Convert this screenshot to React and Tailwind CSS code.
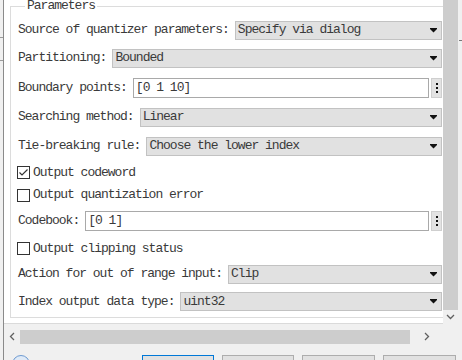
import React from "react";

const font = { fontFamily: '"Liberation Mono", "DejaVu Sans Mono", monospace' };

function Arrow() {
  return (
    <svg width="7" height="5" viewBox="0 0 7 5" className="shrink-0">
      <rect x="0" y="0" width="7" height="1" fill="#111" />
      <polygon points="0,1 7,1 3.5,4.5" fill="#111" />
    </svg>
  );
}

function Select({ value }) {
  return (
    <div className="flex-1 h-[19px] bg-[#e1e1e1] border border-[#c2c2c2] flex items-center pl-[2px] pr-[4px]">
      <span className="flex-1 whitespace-nowrap overflow-hidden">{value}</span>
      <Arrow />
    </div>
  );
}

function TextInput({ value }) {
  return (
    <div className="flex-1 flex items-center">
      <div className="flex-1 h-[20px] bg-white border border-[#a9a9a9] flex items-center pl-[2px]">
        <span className="whitespace-nowrap">{value}</span>
      </div>
      <div className="ml-[2px] w-[11px] h-[20px] bg-[#e3e3e3] border border-[#cfcfcf] flex flex-col items-center justify-center gap-[2px]">
        <div className="w-[2px] h-[2px] bg-[#111]" />
        <div className="w-[2px] h-[2px] bg-[#111]" />
        <div className="w-[2px] h-[2px] bg-[#111]" />
      </div>
    </div>
  );
}

function Row({ h, label, children }) {
  return (
    <div className={`flex items-center gap-[6px] ${h}`}>
      <span className="shrink-0 whitespace-nowrap">{label}</span>
      {children}
    </div>
  );
}

function Check({ h, label, checked }) {
  return (
    <div className={`flex items-center ${h}`}>
      <div className="w-[13px] h-[13px] ml-[-1px] border border-[#333] bg-white flex items-center justify-center shrink-0">
        {checked && (
          <svg width="11" height="11" viewBox="0 0 11 11">
            <polyline points="1.5,5.5 4,8 9.5,2.5" fill="none" stroke="#333" strokeWidth="1.2" />
          </svg>
        )}
      </div>
      <span className="ml-[3px] whitespace-nowrap">{label}</span>
    </div>
  );
}

export default function App() {
  return (
    <div
      className="w-[462px] h-[360px] overflow-hidden bg-[#f0f0f0] flex text-[13px] leading-[14px] tracking-[-1px] text-[#3a3a3a]"
      style={font}
    >
      {/* left strip */}
      <div className="w-[3px] shrink-0 flex flex-col">
        <div className="mt-[37px] h-px bg-[#9a9a9a]" />
        <div className="mt-[22px] h-px bg-[#9a9a9a]" />
      </div>
      <div className="w-px shrink-0 bg-[#8a8a8a]" />

      {/* main */}
      <div className="w-[455px] shrink-0 h-[360px] flex flex-col">
        <div className="flex h-[324px] shrink-0">
          <div className="w-[439px] h-[324px] bg-white border-b border-[#dadada] overflow-hidden">
            <fieldset className="ml-[6px] mt-[-1px] w-[450px] border border-[#dcdcdc] pl-[7px] pr-[17px] pb-0">
              <legend className="ml-[7px] px-[2px] leading-[14px]">Parameters</legend>
              <div className="pt-[3px]">
                <Row h="h-[28px]" label="Source of quantizer parameters:">
                  <Select value="Specify via dialog" />
                </Row>
                <Row h="h-[28px]" label="Partitioning:">
                  <Select value="Bounded" />
                </Row>
                <Row h="h-[31px]" label="Boundary points:">
                  <TextInput value="[0 1 10]" />
                </Row>
                <Row h="h-[28px]" label="Searching method:">
                  <Select value="Linear" />
                </Row>
                <Row h="h-[30px]" label="Tie-breaking rule:">
                  <Select value="Choose the lower index" />
                </Row>
                <Check h="h-[23px]" label="Output codeword" checked />
                <Check h="h-[22px]" label="Output quantization error" />
                <Row h="h-[29px]" label="Codebook:">
                  <TextInput value="[0 1]" />
                </Row>
                <Check h="h-[27px]" label="Output clipping status" />
                <Row h="h-[24px]" label="Action for out of range input:">
                  <Select value="Clip" />
                </Row>
                <Row h="h-[31px]" label="Index output data type:">
                  <Select value="uint32" />
                </Row>
              </div>
            </fieldset>
          </div>
          {/* vertical scrollbar */}
          <div className="w-[16px] flex flex-col">
            <div className="w-[15px] h-[310px] bg-[#cdcdcd]" />
            <div className="flex-1 flex items-center justify-center pr-[2px]">
              <svg width="9" height="6" viewBox="0 0 9 6">
                <polyline points="1,1 4.5,4.5 8,1" fill="none" stroke="#606060" strokeWidth="1.3" />
              </svg>
            </div>
          </div>
        </div>

        {/* horizontal scrollbar */}
        <div className="h-[23px] shrink-0 flex items-center">
          <div className="w-[16px] flex items-center justify-center pt-[1px]">
            <svg width="6" height="9" viewBox="0 0 6 9">
              <polyline points="5,1 1.5,4.5 5,8" fill="none" stroke="#606060" strokeWidth="1.3" />
            </svg>
          </div>
          <div className="w-[390px] h-[14px] bg-[#cdcdcd] mt-[3px]" />
          <div className="w-[33px] flex items-center justify-center pt-[1px]">
            <svg width="6" height="9" viewBox="0 0 6 9">
              <polyline points="1,1 4.5,4.5 1,8" fill="none" stroke="#606060" strokeWidth="1.3" />
            </svg>
          </div>
        </div>

        {/* dialog buttons */}
        <div className="flex-1 min-h-0 overflow-hidden flex items-start pt-[8px] pr-[3px]">
          <div className="ml-[8px] w-[18px] h-[18px] shrink-0 rounded-full border border-[#6f9bd1] bg-[#dfeaf7]" />
          <div className="flex-1" />
          <div className="flex gap-[8px]">
            <div className="w-[72px] h-[23px] shrink-0 bg-[#e1e1e1] border border-[#0078d7]" />
            <div className="w-[72px] h-[23px] shrink-0 bg-[#e1e1e1] border border-[#adadad]" />
            <div className="w-[73px] h-[23px] shrink-0 bg-[#e1e1e1] border border-[#adadad]" />
            <div className="w-[73px] h-[23px] shrink-0 bg-[#e1e1e1] border border-[#adadad]" />
          </div>
        </div>
      </div>

      {/* right strip */}
      <div className="w-[3px] shrink-0 flex flex-col">
        <div className="mt-[40px] h-px bg-[#777]" />
      </div>
    </div>
  );
}
